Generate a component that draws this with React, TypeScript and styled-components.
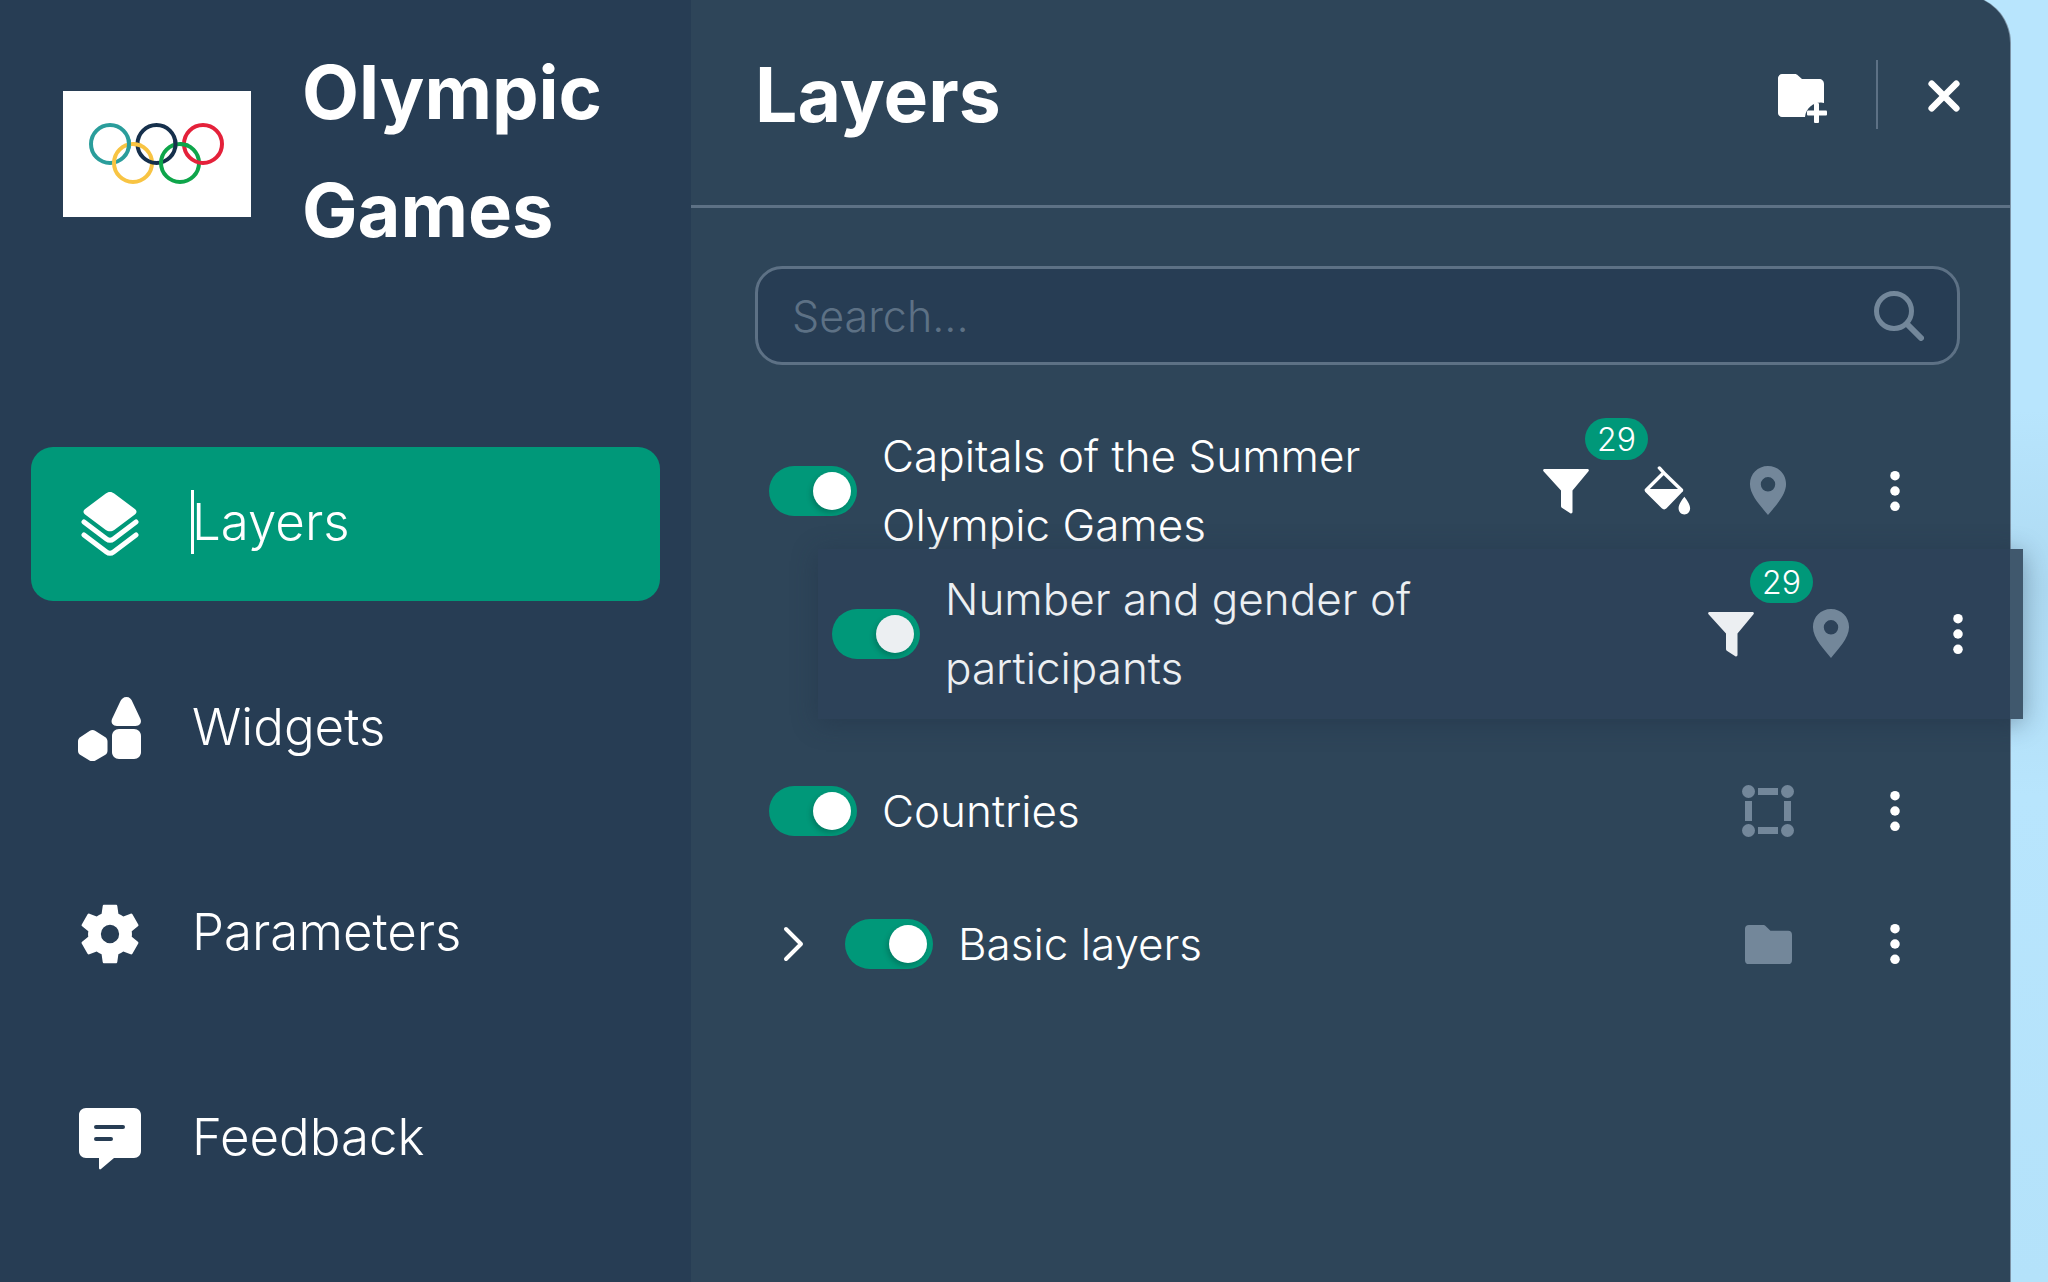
import styled, { createGlobalStyle } from 'styled-components';
import { ReactNode } from 'react';

const GlobalStyle = createGlobalStyle`
  html, body {
    margin: 0;
    padding: 0;
    background: #b8e5fd;
  }
  * {
    box-sizing: border-box;
  }
`;

const COLORS = {
  sidebar: '#273d54',
  panel: '#2e4559',
  green: '#009879',
  muted: '#73879a',
  line: '#5d7185',
  white: '#ffffff',
};

const Page = styled.div`
  width: 2048px;
  height: 1282px;
  display: flex;
  overflow: hidden;
  background: linear-gradient(
    180deg,
    #b8e5fd 0,
    #b8e5fd 32%,
    #aedaf2 46%,
    #b8e5fd 62%,
    #b4e2fa 100%
  );
  font-family: 'Inter', 'Open Sans', sans-serif;
  color: ${COLORS.white};
`;

const Sidebar = styled.aside`
  width: 691px;
  flex: none;
  background: ${COLORS.sidebar};
  padding: 34px 31px 0;
`;

const Brand = styled.div`
  display: flex;
  align-items: center;
  gap: 51px;
  padding-left: 32px;
  height: 240px;
  margin-bottom: 173px;
`;

const Logo = styled.div`
  width: 188px;
  height: 126px;
  flex: none;
  background: #fff;
  display: flex;
  align-items: center;
  justify-content: center;
`;

const BrandName = styled.h1`
  margin: 0 0 6px;
  font-size: 74px;
  font-weight: 700;
  line-height: 118px;
`;

const Nav = styled.nav`
  display: flex;
  flex-direction: column;
  gap: 51px;
`;

const NavItem = styled.div<{ $active?: boolean }>`
  height: 154px;
  display: flex;
  align-items: center;
  padding-left: 47px;
  gap: 50px;
  border-radius: 22px;
  font-size: 51px;
  font-weight: 300;
  background: ${({ $active }) => ($active ? COLORS.green : 'transparent')};
`;

const NavIcon = styled.span`
  width: 64px;
  height: 64px;
  flex: none;
  display: flex;
  svg {
    width: 100%;
    height: 100%;
  }
`;

const NavLabel = styled.span<{ $caret?: boolean }>`
  position: relative;
  margin-top: -4px;
  line-height: 64px;
  &::before {
    content: '';
    display: ${({ $caret }) => ($caret ? 'block' : 'none')};
    position: absolute;
    left: -1px;
    top: 0;
    width: 3px;
    height: 64px;
    background: #fff;
  }
`;

const Panel = styled.section`
  width: 1319px;
  flex: none;
  margin-top: -5px;
  padding-top: 5px;
  background: ${COLORS.panel};
  border-top-right-radius: 48px;
  box-shadow: 1px 0 0 #7d93a6;
`;

const PanelHeader = styled.header`
  height: 208px;
  display: flex;
  align-items: center;
  padding: 0 49px 16px 64px;
  border-bottom: 3px solid ${COLORS.line};
`;

const PanelTitle = styled.h2`
  margin: 0;
  flex: 1;
  font-size: 75px;
  font-weight: 700;
`;

const HeaderDivider = styled.div`
  width: 2px;
  height: 69px;
  margin: 0 49px 0 48px;
  background: ${COLORS.line};
`;

const IconSlot = styled.span<{ $size?: number; $dim?: boolean; $drop?: number }>`
  width: ${({ $size }) => $size ?? 54}px;
  height: ${({ $size }) => $size ?? 54}px;
  margin-top: ${({ $drop }) => $drop ?? 0}px;
  flex: none;
  display: flex;
  color: ${({ $dim }) => ($dim ? COLORS.muted : COLORS.white)};
  svg {
    width: 100%;
    height: 100%;
  }
`;

const SearchBox = styled.div`
  height: 99px;
  margin: 58px 50px 0 64px;
  display: flex;
  align-items: center;
  justify-content: space-between;
  padding: 0 33px 0 34px;
  background: ${COLORS.sidebar};
  border: 3px solid ${COLORS.line};
  border-radius: 27px;
  color: ${COLORS.line};
  font-size: 43px;
  font-weight: 300;
`;

const List = styled.div`
  margin-top: 57px;
  display: flex;
  flex-direction: column;
`;

const Row = styled.div<{ $h: number; $mt?: number }>`
  height: ${({ $h }) => $h}px;
  margin-top: ${({ $mt }) => $mt ?? 0}px;
  padding-left: 78px;
  padding-right: 65px;
  display: flex;
  align-items: center;
`;

const DragRow = styled.div`
  height: 170px;
  margin: -11px -13px 0 127px;
  padding: 0 15px 0 14px;
  display: flex;
  align-items: center;
  background: linear-gradient(to right, #2d4259 calc(100% - 13px), #40586d 0);
  box-shadow: 0 4px 24px rgba(30, 45, 65, 0.4);
`;

const Toggle = styled.div<{ $soft?: boolean }>`
  width: 88px;
  height: 50px;
  flex: none;
  margin-right: 25px;
  padding-right: 6px;
  display: flex;
  align-items: center;
  justify-content: flex-end;
  border-radius: 25px;
  background: ${COLORS.green};
  &::after {
    content: '';
    width: 38px;
    height: 38px;
    border-radius: 50%;
    background: ${({ $soft }) => ($soft ? '#eceff2' : '#fff')};
    box-shadow: -2px 3px 5px rgba(0, 60, 50, 0.3);
  }
`;

const RowLabel = styled.div<{ $soft?: boolean }>`
  flex: 1;
  font-size: 44px;
  line-height: 69px;
  font-weight: 300;
  color: ${({ $soft }) => ($soft ? '#eceff2' : '#fff')};
`;

const Actions = styled.div`
  display: flex;
  align-items: center;
`;

const Action = styled.span<{ $ml?: number }>`
  position: relative;
  width: 100px;
  margin-left: ${({ $ml }) => $ml ?? 0}px;
  flex: none;
  display: flex;
  justify-content: center;
`;

const Badge = styled.span`
  position: absolute;
  left: 69px;
  top: -50px;
  width: 63px;
  height: 42px;
  border-radius: 21px;
  display: flex;
  align-items: center;
  justify-content: center;
  background: ${COLORS.green};
  color: #fff;
  font-size: 32px;
  font-weight: 300;
`;

const Chevron = styled.span`
  width: 76px;
  flex: none;
  display: flex;
  padding-left: 10px;
  svg {
    width: 34px;
    height: 40px;
  }
`;

const LayersIcon = () => (
  <svg viewBox="0 3 64 64">
    <path
      fill="#fff"
      d="M32 3c1.600 0 3 .6 4.200 1.600l21 15.600c1.800 1.400 1.800 3.600 0 5L36.200 41c-2.400 1.800-6 1.800-8.400 0L6.800 25.200c-1.800-1.400-1.800-3.600 0-5l21-15.600C29 3.600 30.400 3 32 3z"
    />
    <path
      fill="none"
      stroke="#fff"
      strokeWidth="5"
      strokeLinecap="round"
      d="M6 33l22.500 17c2 1.500 5 1.500 7 0L58 33M6 46l22.500 17c2 1.500 5 1.500 7 0L58 46"
    />
  </svg>
);

const WidgetsIcon = () => (
  <svg viewBox="0 0 64 64" fill="#fff">
    <path d="M48.500 0c3 0 5 2 6 5l8 17c1.500 4-1 7-5 7H39c-4 0-6.500-3-5-7l8-17c1-3 3.500-5 6.500-5z" />
    <path d="M41 32h15c4 0 7 3 7 7v16c0 4-3 7-7 7H41c-4 0-7-3-7-7V39c0-4 3-7 7-7z" />
    <path d="M14.500 33c1 0 2 .3 3 1l9.500 6c1.700 1 2.500 2.500 2.500 4.500v9c0 2-.8 3.500-2.500 4.500l-9.500 5.500c-2 1.200-4 1.200-6 0L2.500 58C.8 57 0 55.500 0 53.500v-9c0-2 .8-3.500 2.500-4.500l9-6c1-.7 2-1 3-1z" />
  </svg>
);

const GearIcon = () => (
  <svg viewBox="1.500 1.500 21 21">
    <path
      fill="#fff"
      fillRule="evenodd"
      d="M19.140 12.940c.04-.3.06-.61.06-.94 0-.32-.02-.64-.07-.94l2.030-1.580c.18-.14.23-.41.12-.61l-1.920-3.320c-.12-.22-.37-.29-.59-.22l-2.390.96c-.5-.38-1.030-.7-1.620-.94l-.36-2.540c-.04-.24-.24-.41-.48-.41h-3.840c-.24 0-.43.17-.47.41l-.36 2.540c-.59.24-1.130.57-1.620.94l-2.390-.96c-.22-.08-.47 0-.59.22L2.740 8.870c-.12.21-.08.47.12.61l2.030 1.580c-.05.3-.09.63-.09.94s.02.64.07.94l-2.030 1.580c-.18.14-.23.41-.12.61l1.920 3.320c.12.22.37.29.59.22l2.390-.96c.5.38 1.030.7 1.620.94l.36 2.540c.05.24.24.41.48.41h3.840c.24 0 .44-.17.47-.41l.36-2.540c.59-.24 1.130-.56 1.620-.94l2.390.96c.22.08.47 0 .59-.22l1.920-3.320c.12-.22.07-.47-.12-.61l-2.010-1.580zM12 9a3 3 0 1 0 0 6 3 3 0 0 0 0-6z"
    />
  </svg>
);

const FeedbackIcon = () => (
  <svg viewBox="0 0 64 64">
    <path
      fill="#fff"
      fillRule="evenodd"
      d="M8 1h48c4 0 7 3 7 7v36c0 4-3 7-7 7H36L23 62c-1 .8-2 .3-2-1V51H8c-4 0-7-3-7-7V8c0-4 3-7 7-7zM18 18a2 2 0 0 0 0 4h27a2 2 0 0 0 0-4zM18 30a2 2 0 0 0 0 4h15a2 2 0 0 0 0-4z"
    />
  </svg>
);

const FolderPlusIcon = () => (
  <svg viewBox="0 0 50 50" fill="#fff">
    <path d="M4 1h13c1.200 0 2 .5 3 1.500L24 6h17c3 0 5 2 5 5v19a15 15 0 0 0-3-.5C35 29.500 28 35 27 44H4c-2 0-4-2-4-4V5c0-2 2-4 4-4z" />
    <rect x="36" y="30" width="5" height="20" rx="1" />
    <rect x="29" y="37.500" width="20" height="5" rx="1" />
  </svg>
);

const CloseIcon = () => (
  <svg viewBox="0 0 36 36" fill="none" stroke="#fff" strokeWidth="7" strokeLinecap="round">
    <path d="M5 5l26 26M31 5L5 31" />
  </svg>
);

const SearchIcon = () => (
  <svg viewBox="0 0 50 50" fill="none" stroke={COLORS.muted} strokeWidth="5" strokeLinecap="round">
    <circle cx="20" cy="20" r="17.500" />
    <path d="M33 33l14 14" strokeWidth="6" />
  </svg>
);

const FilterIcon = ({ color = '#fff' }: { color?: string }) => (
  <svg viewBox="0 0 46 46">
    <path
      fill={color}
      d="M1.500 1h43c1.200 0 1.800 1.400 1 2.300L29.500 22.500V44c0 1.200-1.200 1.800-2.200 1.200l-8.500-5.500c-.6-.4-.8-1-.8-1.700V22.500L.5 3.300C-.3 2.400.3 1 1.500 1z"
    />
  </svg>
);

const BucketIcon = () => (
  <svg viewBox="0 0 50 52" fill="#fff">
    <path
      fill="none"
      stroke="#fff"
      strokeWidth="3.500"
      strokeLinecap="round"
      strokeLinejoin="round"
      d="M16 2l4.500 5M2.500 25L20.500 7 39 25"
    />
    <path d="M2 24h37.500c1.200 0 1.600 1.400 1 2.200L23.500 44c-1.500 1.600-3.500 1.600-5 0L1.500 27C.6 26 .8 24 2 24z" />
    <path d="M42 32c2.500 3.500 6 7.500 6 12 0 3.500-2.700 6.500-6 6.500s-6-3-6-6.500c0-4.500 3.500-8.500 6-12z" />
  </svg>
);

const PinIcon = () => (
  <svg viewBox="0 0 40 54">
    <path
      fill={COLORS.muted}
      fillRule="evenodd"
      d="M20 0c11 0 19.500 8.500 19.500 19.500C39.500 32 27 44 20 53 13 44 .5 32 .5 19.500.5 8.500 9 0 20 0zm0 12a7.800 7.800 0 1 0 0 15.600A7.800 7.800 0 0 0 20 12z"
    />
  </svg>
);

const KebabIcon = () => (
  <svg viewBox="0 0 12 44" fill="#fff">
    <circle cx="6" cy="6" r="5" />
    <circle cx="6" cy="22" r="5" />
    <circle cx="6" cy="38" r="5" />
  </svg>
);

const PolygonIcon = () => (
  <svg viewBox="0 0 52 52" fill={COLORS.muted}>
    <circle cx="6.500" cy="6.500" r="6.500" />
    <circle cx="45.500" cy="6.500" r="6.500" />
    <circle cx="6.500" cy="45.500" r="6.500" />
    <circle cx="45.500" cy="45.500" r="6.500" />
    <rect x="16" y="3" width="20" height="7" />
    <rect x="16" y="42" width="20" height="7" />
    <rect x="3" y="16" width="7" height="20" />
    <rect x="42" y="16" width="7" height="20" />
  </svg>
);

const FolderIcon = () => (
  <svg viewBox="0 0 48 40" fill={COLORS.muted}>
    <path d="M4 0h14c1.500 0 2.500.5 3.500 1.500L26 6h18c2.500 0 4 1.500 4 4v26c0 2.500-1.500 4-4 4H4c-2.500 0-4-1.500-4-4V4c0-2.500 1.500-4 4-4z" />
  </svg>
);

const ChevronIcon = () => (
  <svg viewBox="0 0 34 40" fill="none" stroke="#fff" strokeWidth="4" strokeLinecap="round" strokeLinejoin="round">
    <path d="M7 5l15 15L7 35" />
  </svg>
);

const Rings = () => (
  <svg width="136" height="63" viewBox="-21 -21 136 63" fill="none" strokeWidth="4">
    <circle cx="0" cy="0" r="19" stroke="#2a9d9b" />
    <circle cx="23" cy="19" r="19" stroke="#f8c443" />
    <circle cx="46.500" cy="0" r="19" stroke="#16304c" />
    <circle cx="70" cy="19" r="19" stroke="#0ea54a" />
    <circle cx="93" cy="0" r="19" stroke="#e4213a" />
    {/* the other crossing of each pair, so the rings interlock */}
    <path d="M18.600 -4A19 19 0 0 1 18.600 4" stroke="#2a9d9b" />
    <path d="M23 0A19 19 0 0 1 31 1.800" stroke="#f8c443" />
    <path d="M65.100 -4A19 19 0 0 1 65.100 4" stroke="#16304c" />
    <path d="M70 0A19 19 0 0 1 78 1.800" stroke="#0ea54a" />
  </svg>
);

interface ActionDef {
  icon: ReactNode;
  size: number;
  dim?: boolean;
  badge?: string;
  ml?: number;
}

const ActionList = ({ items }: { items: ActionDef[] }) => (
  <Actions>
    {items.map((a, i) => (
      <Action key={i} $ml={a.ml}>
        {a.badge && <Badge>{a.badge}</Badge>}
        <IconSlot $size={a.size} $dim={a.dim}>
          {a.icon}
        </IconSlot>
      </Action>
    ))}
  </Actions>
);

const kebab: ActionDef = { size: 42, ml: 27, icon: <KebabIcon /> };

export default function App() {
  return (
    <Page>
      <GlobalStyle />
      <Sidebar>
        <Brand>
          <Logo>
            <Rings />
          </Logo>
          <BrandName>
            Olympic
            <br />
            Games
          </BrandName>
        </Brand>
        <Nav>
          <NavItem $active>
            <NavIcon>
              <LayersIcon />
            </NavIcon>
            <NavLabel $caret>Layers</NavLabel>
          </NavItem>
          <NavItem>
            <NavIcon>
              <WidgetsIcon />
            </NavIcon>
            <NavLabel>Widgets</NavLabel>
          </NavItem>
          <NavItem>
            <NavIcon>
              <GearIcon />
            </NavIcon>
            <NavLabel>Parameters</NavLabel>
          </NavItem>
          <NavItem>
            <NavIcon>
              <FeedbackIcon />
            </NavIcon>
            <NavLabel>Feedback</NavLabel>
          </NavItem>
        </Nav>
      </Sidebar>
      <Panel>
        <PanelHeader>
          <PanelTitle>Layers</PanelTitle>
          <IconSlot $size={50} $drop={7}>
            <FolderPlusIcon />
          </IconSlot>
          <HeaderDivider />
          <IconSlot $size={34} $drop={3}>
            <CloseIcon />
          </IconSlot>
        </PanelHeader>
        <SearchBox>
          Search...
          <IconSlot $size={50}>
            <SearchIcon />
          </IconSlot>
        </SearchBox>
        <List>
          <Row $h={138}>
            <Toggle />
            <RowLabel>
              Capitals of the Summer
              <br />
              Olympic Games
            </RowLabel>
            <ActionList
              items={[
                { size: 46, icon: <FilterIcon />, badge: '29' },
                { size: 50, ml: 2, icon: <BucketIcon /> },
                { size: 50, dim: true, icon: <PinIcon /> },
                kebab,
              ]}
            />
          </Row>
          <DragRow>
            <Toggle $soft />
            <RowLabel $soft>
              Number and gender of
              <br />
              participants
            </RowLabel>
            <ActionList
              items={[
                { size: 46, icon: <FilterIcon color="#eceff2" />, badge: '29' },
                { size: 50, dim: true, icon: <PinIcon /> },
                kebab,
              ]}
            />
          </DragRow>
          <Row $h={60} $mt={62}>
            <Toggle />
            <RowLabel>Countries</RowLabel>
            <ActionList
              items={[
                { size: 52, dim: true, icon: <PolygonIcon /> },
                kebab,
              ]}
            />
          </Row>
          <Row $h={60} $mt={73}>
            <Chevron>
              <ChevronIcon />
            </Chevron>
            <Toggle />
            <RowLabel>Basic layers</RowLabel>
            <ActionList
              items={[
                { size: 47, dim: true, icon: <FolderIcon /> },
                kebab,
              ]}
            />
          </Row>
        </List>
      </Panel>
    </Page>
  );
}
